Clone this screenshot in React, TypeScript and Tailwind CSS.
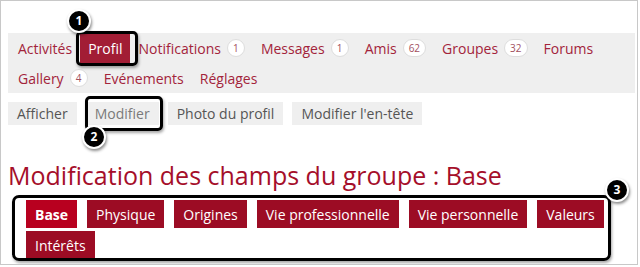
import React from 'react';

const NAV_ROW_1 = [
  { label: 'Activités' },
  { label: 'Profil', active: true },
  { label: 'Notifications', count: '1' },
  { label: 'Messages', count: '1' },
  { label: 'Amis', count: '62' },
  { label: 'Groupes', count: '32' },
  { label: 'Forums' },
];

const NAV_ROW_2 = [
  { label: 'Gallery', count: '4' },
  { label: 'Evénements' },
  { label: 'Réglages' },
];

const SUB_NAV = ['Afficher', 'Modifier', 'Photo du profil', "Modifier l'en-tête"];

const TABS = ['Base', 'Physique', 'Origines', 'Vie professionnelle', 'Vie personnelle', 'Valeurs', 'Intérêts'];

type NavItem = { label: string; count?: string; active?: boolean };

function NavLink({ item }: { item: NavItem }) {
  return (
    <a
      className={`flex h-[30px] items-center gap-[6px] px-2 text-[14px] ${
        item.active ? 'bg-[#a21d35] text-white' : 'text-[#a3243b]'
      }`}
    >
      {item.label}
      {item.count && (
        <span className="flex h-[18px] min-w-[18px] items-center justify-center rounded-full border border-[#dddddd] bg-white px-[5px] text-[10px] text-[#a2505e]">
          {item.count}
        </span>
      )}
    </a>
  );
}

// numbered callout used by the annotation layer
function Marker({ n, className }: { n: number; className: string }) {
  return (
    <div
      className={`absolute flex h-[24px] w-[24px] items-center justify-center rounded-full border-2 border-white bg-black text-[12px] font-bold text-white shadow-[1px_2px_3px_rgba(0,0,0,0.45)] ${className}`}
    >
      {n}
    </div>
  );
}

export default function App() {
  return (
    <div className="relative h-[265px] w-[638px] overflow-hidden border border-[#c8c8c8] bg-white font-['Open_Sans',sans-serif]">
      {/* Main profile nav */}
      <div className="ml-[7px] mt-[32px] w-[627px] bg-[#efefef] pl-[2px]">
        <div className="flex">
          {NAV_ROW_1.map((item) => (
            <NavLink key={item.label} item={item} />
          ))}
        </div>
        <div className="flex">
          {NAV_ROW_2.map((item) => (
            <NavLink key={item.label} item={item} />
          ))}
        </div>
      </div>

      {/* Sub nav */}
      <div className="ml-[7px] mt-[9px] flex gap-[9px]">
        {SUB_NAV.map((label) => (
          <a
            key={label}
            className={`flex h-[23px] items-center bg-[#efefef] px-[9px] text-[14px] ${
              label === 'Modifier' ? 'text-[#7a7a7a]' : 'text-[#555555]'
            }`}
          >
            {label}
          </a>
        ))}
      </div>

      <h2 className="ml-[7px] mt-[35px] text-[25px] leading-[30px] text-[#a50e2a]">
        Modification des champs du groupe : Base
      </h2>

      {/* Field group tabs */}
      <div className="ml-[25px] mt-[10px] flex w-[590px] flex-wrap gap-x-[10px] gap-y-[3px]">
        {TABS.map((tab) => (
          <a
            key={tab}
            className={`flex h-[28px] items-center px-[9px] text-[14px] text-white ${
              tab === 'Base' ? 'bg-[#b8001f] font-bold' : 'bg-[#9c0c24]'
            }`}
          >
            {tab}
          </a>
        ))}
      </div>

      {/* Annotation overlays */}
      <div className="absolute left-[75px] top-[30px] h-[35px] w-[62px] rounded-[5px] border-[3px] border-black shadow-[1px_2px_3px_rgba(0,0,0,0.35)]" />
      <Marker n={1} className="left-[66px] top-[8px]" />

      <div className="absolute left-[84px] top-[95px] h-[35px] w-[78px] rounded-[5px] border-[3px] border-black shadow-[1px_2px_3px_rgba(0,0,0,0.35)]" />
      <Marker n={2} className="left-[81px] top-[124px]" />

      <div className="absolute left-[11px] top-[194px] h-[66px] w-[599px] rounded-[7px] border-[3px] border-black shadow-[1px_2px_3px_rgba(0,0,0,0.35)]" />
      <Marker n={3} className="left-[604px] top-[177px]" />
    </div>
  );
}
